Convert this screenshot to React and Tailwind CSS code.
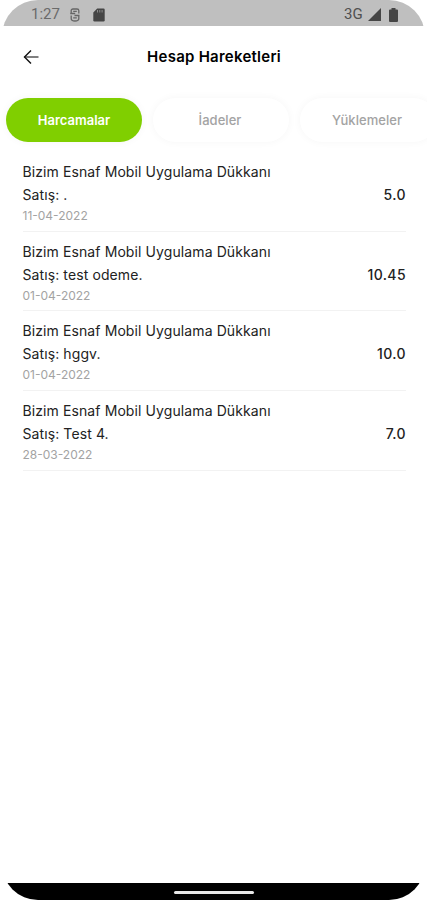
const tabs = [
    { id: 1, title: "Harcamalar", active: true },
    { id: 2, title: "İadeler", active: false },
    { id: 3, title: "Yüklemeler", active: false },
];

const transactions = [
    { id: 1, detail: "Satış: .", date: "11-04-2022", amount: "5.0" },
    { id: 2, detail: "Satış: test odeme.", date: "01-04-2022", amount: "10.45" },
    { id: 3, detail: "Satış: hggv.", date: "01-04-2022", amount: "10.0" },
    { id: 4, detail: "Satış: Test 4.", date: "28-03-2022", amount: "7.0" },
];

const StatusBar = () => {
    return (
        <div className="flex h-[26px] items-center justify-between bg-[#bfbfbf] pt-[3px] pr-[27px] pl-[29px] font-['Roboto',sans-serif] text-[15px] text-[#6a6a6a]">
            <div className="flex items-center">
                <span className="w-[31px] whitespace-nowrap">1:27</span>
                <svg className="ml-[7px]" width="12" height="14" viewBox="0 0 12 14" fill="none" stroke="#666" strokeWidth="1.3">
                    <path d="M2.200 5.500V2.600Q2.200 1 4 1h4q1.800 0 1.800 1.600V5.500M1.200 5.500h5M5.500 7.500h5M2.200 7.500v3Q2.200 13 6 13t3.800-2.500v-3M4.200 3.300h3.600M4.200 9.800h3.600" />
                </svg>
                <svg className="ml-[12px]" width="12" height="14" viewBox="0 0 12 14" fill="#454545">
                    <path d="M4.200.5h6.300q1.200 0 1.200 1.200v10.600q0 1.200-1.200 1.200h-9Q.3 13.500.3 12.300V4.500z" />
                    <path d="M4.500 2v2.500M6.800 2v2.500M9.100 2v2.500" stroke="#8a8a8a" />
                </svg>
            </div>
            <div className="flex items-center text-[#505050]">
                <span className="w-[20px] whitespace-nowrap">3G</span>
                <svg className="ml-[4px]" width="13" height="13" viewBox="0 0 13 13" fill="#454545">
                    <path d="M13 0v13H0z" />
                </svg>
                <svg className="ml-[8px]" width="9" height="14" viewBox="0 0 9 14" fill="#454545">
                    <path d="M2.500 0h4v1.500H8q1 0 1 1V13q0 1-1 1H1q-1 0-1-1V2.500q0-1 1-1h1.500z" />
                </svg>
            </div>
        </div>
    );
};

const Header = () => {
    return (
        <div className="flex h-[62px] items-center px-[21px]">
            <svg width="16" height="16" viewBox="0 0 16 16" fill="none" strokeWidth="1.4">
                <path d="M1.200 8H15.500" stroke="#555" />
                <path d="M8 1.500L1.500 8L8 14.500" stroke="#111" />
            </svg>
            <h1 className="flex-1 pr-[15px] text-center text-[15px] font-semibold tracking-[0.25px] text-black">Hesap Hareketleri</h1>
        </div>
    );
};

const Tab = ({ title, active }) => {
    return (
        <button
            className={
                active
                    ? "h-[44px] w-[136px] shrink-0 rounded-full bg-[#80cf00] pt-[2px] text-[13px] font-semibold text-white shadow-[0_0_8px_rgba(0,0,0,0.04)]"
                    : "h-[44px] w-[136px] shrink-0 rounded-full bg-white pt-[2px] pr-[2px] text-[13px] font-medium tracking-[0.05px] text-[#a3a3a3] shadow-[0_0_8px_rgba(0,0,0,0.04)]"
            }
        >
            {title}
        </button>
    );
};

const Transaction = ({ detail, date, amount }) => {
    return (
        <li className="flex h-[79.700px] items-center justify-between border-b border-[#f2f2f2] pt-[2px] text-[14px] tracking-[0.1px] text-[#222]">
            <div>
                <p className="h-[23px] leading-[23px]">Bizim Esnaf Mobil Uygulama Dükkanı</p>
                <p className="h-[23px] leading-[23px]">{detail}</p>
                <p className="h-[19px] text-[12px] leading-[19px] tracking-normal text-[#a3a3a3]">{date}</p>
            </div>
            <span className="pt-[4px] font-medium tracking-[0.4px]">{amount}</span>
        </li>
    );
};

export default function App() {
    return (
        <div className="flex h-[900px] w-[427px] flex-col overflow-hidden bg-white font-['Inter',sans-serif]">
            <div className="mx-[2px] overflow-hidden rounded-t-[36px]">
                <StatusBar />
                <Header />
            </div>
            <div className="flex gap-[11px] overflow-hidden py-[10px] pl-[6px]">
                {tabs.map((tab) => (
                    <Tab key={tab.id} title={tab.title} active={tab.active} />
                ))}
            </div>
            <ul className="mr-[21px] ml-[22.500px]">
                {transactions.map((item) => (
                    <Transaction key={item.id} detail={item.detail} date={item.date} amount={item.amount} />
                ))}
            </ul>
            <div className="mx-[2px] mt-auto overflow-hidden rounded-b-[36px] pt-[40px]">
                <div className="flex h-[17px] justify-center bg-black pt-[8px]">
                    <div className="h-[3px] w-[80px] rounded-full bg-[#e8e8e8]"></div>
                </div>
            </div>
        </div>
    );
}
